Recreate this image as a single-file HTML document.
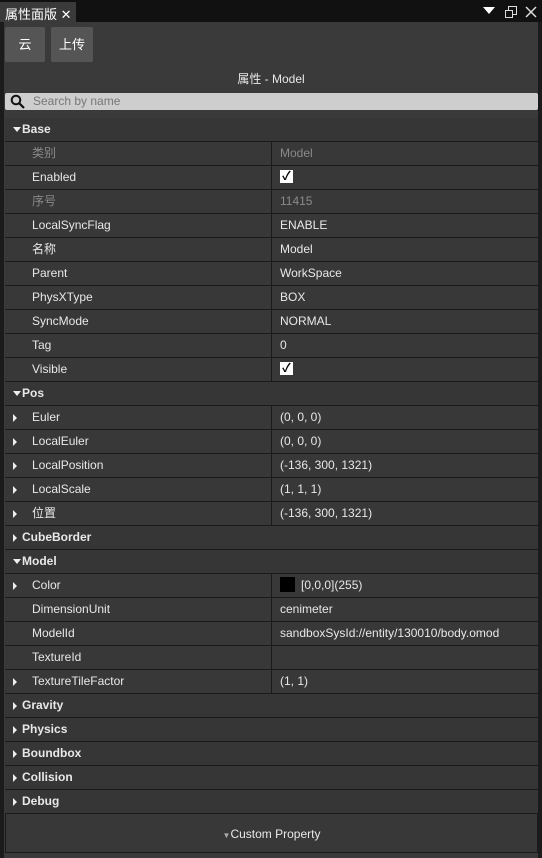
<!DOCTYPE html>
<html><head><meta charset="utf-8"><style>
*{margin:0;padding:0;box-sizing:border-box}
body{width:542px;height:858px;background:#1b1b1b;font-family:"Liberation Sans","Noto Sans CJK SC",sans-serif;color:#e8e8e8;font-size:12px;position:relative;overflow:hidden}
.top{position:absolute;left:0;top:0;width:542px;height:22px;background:#111}
.tab{position:absolute;left:0;top:2px;width:76px;height:20px;background:#3a3a3a;font-size:13px;color:#fff;padding:2px 0 0 5px}
.panel{position:absolute;left:4px;top:22px;width:534px;height:836px;background:#3a3a3a}
.btn{position:absolute;top:5px;height:35px;background:#555;border-radius:2px;color:#fff;font-size:13px;text-align:center;line-height:35px}
.title{position:absolute;top:48px;left:0;width:534px;text-align:center;font-size:12px}
.search{position:absolute;left:1px;top:71px;width:533px;height:17px;background:#cecece;border-radius:2px;color:#777;font-size:12px;line-height:17px;padding-left:28px}
.rows{position:absolute;left:1px;top:96px;width:533px}
.r{height:24px;border-bottom:1px solid #1a1a1a;position:relative;background:#383838;line-height:23px}
.r .k{position:absolute;left:27px}
.r .v{position:absolute;left:266px;top:0;height:23px;border-left:1px solid #1a1a1a;padding-left:8px;width:267px}
.g{font-weight:bold;background:#363636}
.g .k{left:17px}
.dim{color:#8a8a8a}
.tri{position:absolute;left:8px;top:9px;width:0;height:0;border-left:4px solid transparent;border-right:4px solid transparent;border-top:5px solid #eee}
.ctri{position:absolute;left:8px;top:8px;width:0;height:0;border-top:4px solid transparent;border-bottom:4px solid transparent;border-left:4px solid #eee}
.cb{display:inline-block;width:13px;height:13px;background:#fff;color:#000;font-size:12px;line-height:13px;text-align:center;font-weight:bold;vertical-align:middle;margin-top:-2px}
.custom{position:absolute;left:1px;top:790px;width:533px;height:41px;border:1px solid #1a1a1a;background:#383838;text-align:center;line-height:40px}
</style></head><body>
<div class="top"></div>
<div class="tab">属性面版 ✕</div>
<div style="position:absolute;left:483px;top:7px;border-left:6px solid transparent;border-right:6px solid transparent;border-top:7px solid #fff"></div>
<svg style="position:absolute;left:504px;top:5px" width="14" height="14"><rect x="4.5" y="1.5" width="8" height="8" fill="none" stroke="#ddd"/><rect x="1.5" y="5.5" width="7" height="7" fill="#111" stroke="#ddd"/></svg>
<svg style="position:absolute;left:524px;top:5px" width="14" height="14"><path d="M2 2L12 12M12 2L2 12" stroke="#ddd" stroke-width="1.5"/></svg>
<div class="panel">
<div class="btn" style="left:1px;width:40px">云</div>
<div class="btn" style="left:47px;width:42px">上传</div>
<div class="title">属性 - Model</div>
<div class="search"><svg style="position:absolute;left:5px;top:1px" width="16" height="16"><circle cx="6" cy="6" r="4.3" fill="none" stroke="#111" stroke-width="2"/><path d="M9 9L14 14" stroke="#111" stroke-width="2.2"/></svg>Search by name</div>
<div class="rows">
<div class="r g"><i class="tri"></i><span class="k">Base</span></div>
<div class="r"><span class="k dim">类别</span><span class="v dim">Model</span></div>
<div class="r"><span class="k">Enabled</span><span class="v"><span class="cb">✓</span></span></div>
<div class="r"><span class="k dim">序号</span><span class="v dim">11415</span></div>
<div class="r"><span class="k">LocalSyncFlag</span><span class="v">ENABLE</span></div>
<div class="r"><span class="k">名称</span><span class="v">Model</span></div>
<div class="r"><span class="k">Parent</span><span class="v">WorkSpace</span></div>
<div class="r"><span class="k">PhysXType</span><span class="v">BOX</span></div>
<div class="r"><span class="k">SyncMode</span><span class="v">NORMAL</span></div>
<div class="r"><span class="k">Tag</span><span class="v">0</span></div>
<div class="r"><span class="k">Visible</span><span class="v"><span class="cb">✓</span></span></div>
<div class="r g"><i class="tri"></i><span class="k">Pos</span></div>
<div class="r"><i class="ctri"></i><span class="k">Euler</span><span class="v">(0, 0, 0)</span></div>
<div class="r"><i class="ctri"></i><span class="k">LocalEuler</span><span class="v">(0, 0, 0)</span></div>
<div class="r"><i class="ctri"></i><span class="k">LocalPosition</span><span class="v">(-136, 300, 1321)</span></div>
<div class="r"><i class="ctri"></i><span class="k">LocalScale</span><span class="v">(1, 1, 1)</span></div>
<div class="r"><i class="ctri"></i><span class="k">位置</span><span class="v">(-136, 300, 1321)</span></div>
<div class="r g"><i class="ctri"></i><span class="k">CubeBorder</span></div>
<div class="r g"><i class="tri"></i><span class="k">Model</span></div>
<div class="r"><i class="ctri"></i><span class="k">Color</span><span class="v"><span style="display:inline-block;width:15px;height:15px;background:#000;vertical-align:middle;margin:-3px 6px 0 0"></span>[0,0,0](255)</span></div>
<div class="r"><span class="k">DimensionUnit</span><span class="v">cenimeter</span></div>
<div class="r"><span class="k">ModelId</span><span class="v">sandboxSysId://entity/130010/body.omod</span></div>
<div class="r"><span class="k">TextureId</span><span class="v"></span></div>
<div class="r"><i class="ctri"></i><span class="k">TextureTileFactor</span><span class="v">(1, 1)</span></div>
<div class="r g"><i class="ctri"></i><span class="k">Gravity</span></div>
<div class="r g"><i class="ctri"></i><span class="k">Physics</span></div>
<div class="r g"><i class="ctri"></i><span class="k">Boundbox</span></div>
<div class="r g"><i class="ctri"></i><span class="k">Collision</span></div>
<div class="r g"><i class="ctri"></i><span class="k">Debug</span></div>
</div>
<div class="custom" style="top:791px;height:40px"><span style="font-size:8px;color:#aaa">▼</span>Custom Property</div>
</div>
</body></html>
